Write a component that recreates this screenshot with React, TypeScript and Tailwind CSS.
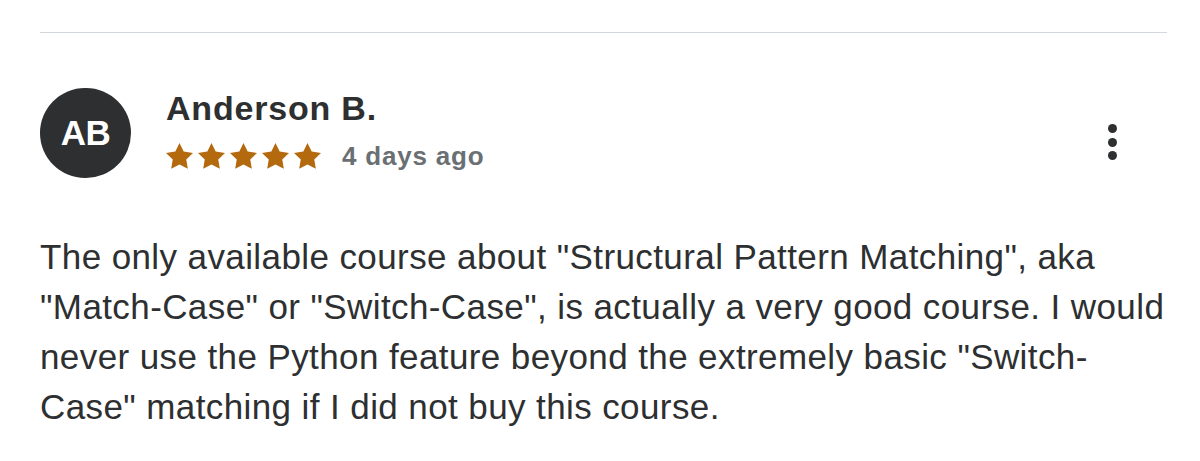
import React from 'react';

const Star = () => (
  <svg viewBox="2 2 20 19.1" className="w-[27px] h-[26px] fill-[#b4690e]">
    <path d="M12 2l3.09 6.26L22 9.27l-5 4.87 1.18 6.88L12 17.77l-6.18 3.25L7 14.14 2 9.27l6.91-1.01L12 2z" />
  </svg>
);

export default function App() {
  return (
    <div className="w-[1200px] h-[461px] bg-white px-10 pt-8 text-[#2d2f31] font-['Liberation_Sans',Arial,sans-serif]">
      <div className="w-[1127px] border-t border-[#d1d7dc]" />

      <div className="w-[1127px] flex items-start mt-[55px]">
        {/* Avatar */}
        <div className="w-[91px] h-[90px] rounded-full bg-[#2d2f31] flex items-center justify-center text-white text-[35px] font-bold tracking-[-0.5px]">
          AB
        </div>

        <div className="ml-[35px] flex flex-col">
          <div className="text-[34px] leading-[40px] font-bold tracking-[0.8px]">Anderson B.</div>
          <div className="flex items-center mt-[15px]">
            <div className="flex gap-[5px]">
              <Star />
              <Star />
              <Star />
              <Star />
              <Star />
            </div>
            <span className="ml-[21px] text-[26px] leading-[26px] font-bold text-[#6a6f73] tracking-[0.8px]">
              4 days ago
            </span>
          </div>
        </div>

        {/* More menu */}
        <button className="ml-auto mr-[50px] mt-[36px] flex flex-col gap-[4.5px]" aria-label="More options">
          <span className="w-[9px] h-[9px] rounded-full bg-[#2d2f31]" />
          <span className="w-[9px] h-[9px] rounded-full bg-[#2d2f31]" />
          <span className="w-[9px] h-[9px] rounded-full bg-[#2d2f31]" />
        </button>
      </div>

      <p className="w-[1127px] mt-[54px] text-[35px] leading-[50px] tracking-[0.4px]">
        The only available course about "Structural Pattern Matching", aka "Match-Case" or "Switch-Case", is actually a very good course. I would never use the Python feature beyond the extremely basic "Switch-Case" matching if I did not buy this course.
      </p>
    </div>
  );
}
